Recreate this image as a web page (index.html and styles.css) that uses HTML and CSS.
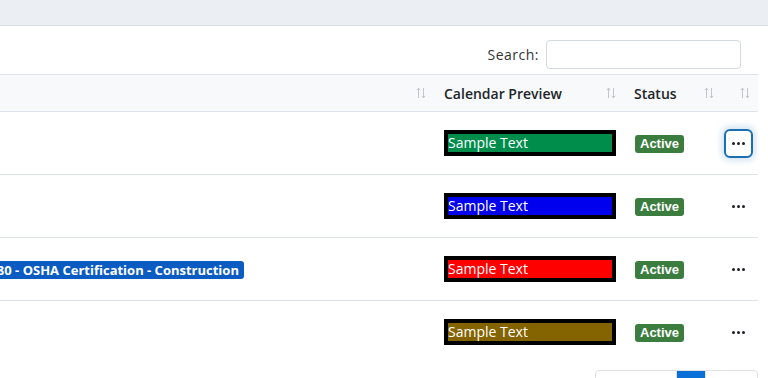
FILE: index.html
```html
<!DOCTYPE html>
<html lang="en">
<head>
    <meta charset="UTF-8">
    <meta name="viewport" content="width=device-width, initial-scale=1.0">
    <title>Calendar Categories</title>
    <link rel="stylesheet" href="styles.css">
</head>
<body>
    <div class="topbar"></div>
    <main class="card">
        <div class="table-tools">
            <label class="search">Search: <input type="search" class="search-input"></label>
        </div>
        <div class="table-scroll">
            <table class="data-table">
                <colgroup>
                    <col class="col-name">
                    <col class="col-preview">
                    <col class="col-status">
                    <col class="col-actions">
                </colgroup>
                <thead>
                    <tr>
                        <th><div class="th-inner th-end"><svg class="sort-icon" viewBox="0 0 10 12"><path d="M2.5 11V1.5M0.8 3.2L2.5 1.2L4.2 3.2M7.5 1V10.5M5.8 8.8L7.5 10.8L9.2 8.8"/></svg></div></th>
                        <th><div class="th-inner"><span>Calendar Preview</span><svg class="sort-icon" viewBox="0 0 10 12"><path d="M2.5 11V1.5M0.8 3.2L2.5 1.2L4.2 3.2M7.5 1V10.5M5.8 8.8L7.5 10.8L9.2 8.8"/></svg></div></th>
                        <th><div class="th-inner"><span>Status</span><svg class="sort-icon" viewBox="0 0 10 12"><path d="M2.5 11V1.5M0.8 3.2L2.5 1.2L4.2 3.2M7.5 1V10.5M5.8 8.8L7.5 10.8L9.2 8.8"/></svg></div></th>
                        <th><div class="th-inner th-end"><svg class="sort-icon" viewBox="0 0 10 12"><path d="M2.5 11V1.5M0.8 3.2L2.5 1.2L4.2 3.2M7.5 1V10.5M5.8 8.8L7.5 10.8L9.2 8.8"/></svg></div></th>
                    </tr>
                </thead>
                <tbody>
                    <tr>
                        <td></td>
                        <td><span class="preview" style="background-color: #008d4c;">Sample Text</span></td>
                        <td><span class="badge-status">Active</span></td>
                        <td><button class="btn-dots is-focused" type="button"><span></span><span></span><span></span></button></td>
                    </tr>
                    <tr>
                        <td></td>
                        <td><span class="preview" style="background-color: #0000ee;">Sample Text</span></td>
                        <td><span class="badge-status">Active</span></td>
                        <td><button class="btn-dots" type="button"><span></span><span></span><span></span></button></td>
                    </tr>
                    <tr>
                        <td><span class="badge-course">1880 - OSHA Certification - Construction</span></td>
                        <td><span class="preview" style="background-color: #ff0000;">Sample Text</span></td>
                        <td><span class="badge-status">Active</span></td>
                        <td><button class="btn-dots" type="button"><span></span><span></span><span></span></button></td>
                    </tr>
                    <tr>
                        <td></td>
                        <td><span class="preview" style="background-color: #846400;">Sample Text</span></td>
                        <td><span class="badge-status">Active</span></td>
                        <td><button class="btn-dots" type="button"><span></span><span></span><span></span></button></td>
                    </tr>
                </tbody>
            </table>
        </div>
        <div class="table-foot">
            <ul class="pagination">
                <li class="page-item page-prev">Previous</li>
                <li class="page-item active">1</li>
                <li class="page-item">Next</li>
            </ul>
        </div>
    </main>
</body>
</html>
```

FILE: styles.css
```css
body {
    font-family: 'Open Sans', sans-serif;
    font-size: 14px;
    margin: 0;
    padding: 0;
    background-color: #fff;
    color: #212529;
}
.topbar {
    height: 25px;
    background-color: #ebeef2;
    border-bottom: 1px solid #d7dde3;
}
.card {
    padding: 14px 10px 0 0;
}
.table-tools {
    display: flex;
    justify-content: flex-end;
    padding-right: 17px;
    margin-bottom: 5px;
}
.search {
    display: flex;
    align-items: center;
    gap: 7px;
    color: #333;
    letter-spacing: 0.5px;
}
.search-input {
    width: 195px;
    height: 29px;
    box-sizing: border-box;
    border: 1px solid #d3d9df;
    border-radius: 4px;
    margin: 0;
}
.table-scroll {
    overflow: hidden;
}
.data-table {
    width: 828px;
    margin-left: -70px;
    border-collapse: collapse;
    table-layout: fixed;
}
.col-name { width: 504px; }
.col-preview { width: 190px; }
.col-status { width: 98px; }
.col-actions { width: 36px; }
.data-table th {
    height: 36px;
    padding: 0 8px 0 10px;
    background-color: #f8f9fa;
    border-top: 1px solid #dde3e9;
    border-bottom: 1px solid #dde3e9;
    font-weight: 600;
    text-align: left;
}
.th-inner {
    display: flex;
    align-items: center;
    justify-content: space-between;
}
.th-end {
    justify-content: flex-end;
}
.sort-icon {
    width: 10px;
    height: 12px;
    fill: none;
    stroke: #b8c0c8;
    stroke-width: 0.9;
}
.data-table td {
    height: 62px;
    padding: 0 10px;
    border-bottom: 1px solid #dde3e9;
    vertical-align: middle;
}
.data-table td:first-child {
    padding-left: 0;
}
.data-table td:last-child {
    padding: 0 5px 0 2px;
}
.data-table tbody tr:last-child td {
    border-bottom: none;
}
.preview {
    display: block;
    width: 164px;
    border: 4px solid #000;
    color: #fff;
    line-height: 18px;
}
.badge-status {
    display: inline-block;
    margin-left: 1px;
    padding: 0 5px;
    line-height: 18px;
    border-radius: 3px;
    background-color: #3b7d3f;
    color: #fff;
    font-family: 'Liberation Sans', sans-serif;
    font-weight: bold;
    font-size: 13px;
}
.badge-course {
    display: inline-block;
    margin-left: 47px;
    padding: 0 5px;
    line-height: 18px;
    border-radius: 3px;
    background-color: #0b5cc2;
    color: #fff;
    font-weight: 700;
    font-size: 13px;
    white-space: nowrap;
}
.btn-dots {
    display: flex;
    align-items: center;
    justify-content: center;
    gap: 2px;
    width: 29px;
    height: 29px;
    padding: 0;
    background: #fff;
    border: 2px solid transparent;
    border-radius: 6px;
}
.btn-dots span {
    width: 3px;
    height: 3px;
    border-radius: 50%;
    background-color: #1c1f24;
}
.btn-dots.is-focused {
    border-color: #1a6eb4;
    box-shadow: 0 0 6px 3px rgba(26, 110, 180, 0.18);
}
.table-foot {
    display: flex;
    justify-content: flex-end;
    padding-top: 7px;
}
.pagination {
    display: flex;
    list-style: none;
    margin: 0;
    padding: 0;
    border: 1px solid #dee2e6;
    border-radius: 4px;
    overflow: hidden;
}
.page-item {
    padding: 6px 10px;
    color: #6c757d;
}
.page-prev {
    padding: 6px 12px;
}
.page-item + .page-item {
    border-left: 1px solid #dee2e6;
}
.page-item.active {
    background-color: #0b6fd8;
    color: #fff;
}
```
